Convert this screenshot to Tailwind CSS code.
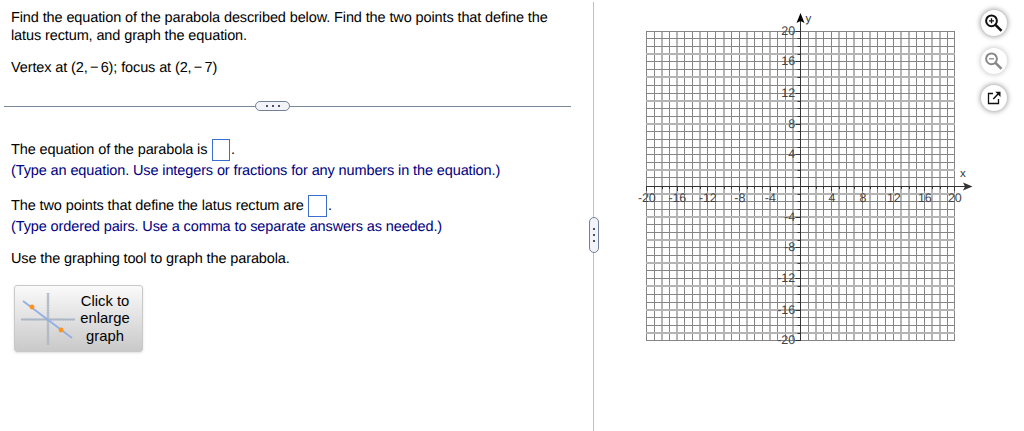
<!DOCTYPE html>
<html lang="en">
<head>
    <meta charset="UTF-8">
    <meta name="viewport" content="width=device-width, initial-scale=1.0">
    <title>Parabola Exercise</title>
    <script src="https://cdn.jsdelivr.net/npm/@tailwindcss/browser@4"></script>
</head>
<body class="bg-white text-black font-['Liberation_Sans',sans-serif] text-[14.5px] tracking-[-0.115px] leading-[18px] [text-rendering:geometricPrecision] h-[431px] flex overflow-hidden">

    <!-- Question -->
    <main class="w-[593px] shrink-0 pl-[11px] pt-[9px] whitespace-nowrap">
        <p>Find the equation of the parabola described below. Find the two points that define the<br>latus rectum, and graph the equation.</p>
        <p class="mt-[14px]">Vertex at (2,<span class="[word-spacing:-1.6px]"> − </span>6); focus at (2,<span class="[word-spacing:-1.6px]"> − </span>7)</p>

        <div class="flex items-center -ml-[7px] mt-[23px] w-[567px] h-3">
            <div class="h-px w-[251px] bg-[#7b889e]"></div>
            <div class="w-[35px] h-[10px] rounded-full border border-[#718096] bg-[#f3f4f9] flex items-center justify-center gap-[4px]">
                <i class="size-[2px] bg-[#4b5363]"></i><i class="size-[2px] bg-[#4b5363]"></i><i class="size-[2px] bg-[#4b5363]"></i>
            </div>
            <div class="h-px flex-1 bg-[#7b889e]"></div>
        </div>

        <div class="flex items-center mt-[26px] h-[23px]">
            <span class="w-[196px]">The equation of the parabola is</span>
            <span class="ml-[5px] w-[18px] h-[22px] border border-[#3c6ecb]"></span>
            <span class="ml-[1px]">.</span>
        </div>
        <p class="mt-px text-[#000080]">(Type an equation. Use integers or fractions for any numbers in the equation.)</p>

        <div class="flex items-center mt-[14px] h-[23px]">
            <span class="w-[292px]">The two points that define the latus rectum are</span>
            <span class="ml-[5px] w-[19px] h-[22px] border border-[#3c6ecb]"></span>
            <span class="ml-[1px]">.</span>
        </div>
        <p class="mt-px text-[#000080]">(Type ordered pairs. Use a comma to separate answers as needed.)</p>
        <p class="mt-[14px]">Use the graphing tool to graph the parabola.</p>

        <button class="ml-[3px] mt-[17px] w-[129px] h-[67px] flex items-center rounded-[3px] border border-[#c9c9c9] bg-linear-to-b from-[#fafafa] to-[#c9c9c9] shadow-sm">
            <svg class="ml-[6px] shrink-0" width="54" height="54" viewBox="0 0 54 54" fill="none">
                <path d="M0 27.5H54M27 1V53" stroke="#a5b2c0" stroke-width="1.5"/>
                <path d="M1 27.5H54M27 1V53" stroke="#b3bdc9" stroke-width="3" stroke-dasharray="1 1.4"/>
                <path d="M2 9L51 46" stroke="#91afe5" stroke-width="1.7"/>
                <circle cx="11" cy="15" r="2.4" fill="#fb931e"/>
                <circle cx="40" cy="38" r="2.4" fill="#fb931e"/>
            </svg>
            <span class="ml-[4px] mt-px w-[52px] text-center text-[14.8px] tracking-normal leading-[17.5px]">Click to<br>enlarge<br>graph</span>
        </button>
    </main>

    <!-- Divider with drag handle -->
    <div class="w-px shrink-0 mt-[2px] bg-[#c0c0cc] relative">
        <div class="absolute -left-[4px] top-[215px] w-[10px] h-[36px] rounded-full border border-[#718096] bg-[#f3f4f9] flex flex-col items-center justify-center gap-[4px]">
            <i class="size-[2px] bg-[#4b5363]"></i><i class="size-[2px] bg-[#4b5363]"></i><i class="size-[2px] bg-[#4b5363]"></i>
        </div>
    </div>

    <!-- Graph -->
    <svg class="shrink-0 ml-[36px]" width="350" height="431" viewBox="630 0 350 431">
        <g id="grid"></g>
        <g id="axes" stroke="#333">
            <path d="M646 186.5H966M800.5 20V341"/>
        </g>
        <path d="M800.5 13L804.5 23L800.5 21L796.5 23Z" fill="#000"/>
        <path d="M972.5 186.5L963 190.5L965 186.5L963 182.5Z" fill="#333"/>
        <g id="labels" fill="#444" font-size="12.5"></g>
        <text x="805.5" y="22" font-size="11.5" fill="#333">y</text>
        <text x="960" y="177" font-size="11.5" fill="#333">x</text>
    </svg>

    <!-- Graph tools -->
    <div class="flex flex-col gap-[11.5px] pt-[10px] pl-[1px]">
        <div class="size-[26px] rounded-full bg-white shadow-[0_0_5px_1px_rgba(0,0,0,0.36)] flex items-center justify-center">
            <svg width="18" height="18" viewBox="0 0 18 18" fill="none" stroke="#111"><circle cx="6.5" cy="6.8" r="5.4" stroke-width="2"/><path d="M10.5 10.8L16.5 16.8" stroke-width="2.6"/><path d="M4 6.8H9M6.5 4.3V9.3" stroke-width="1.3"/></svg>
        </div>
        <div class="size-[26px] rounded-full bg-white shadow-[0_0_5px_1px_rgba(0,0,0,0.2)] flex items-center justify-center">
            <svg width="18" height="18" viewBox="0 0 18 18" fill="none" stroke="#888"><circle cx="6.5" cy="6.8" r="5.4" stroke-width="2"/><path d="M10.5 10.8L16.5 16.8" stroke-width="2.6"/><path d="M4 6.8H9" stroke-width="1.3"/></svg>
        </div>
        <div class="size-[26px] rounded-full bg-white shadow-[0_0_5px_1px_rgba(0,0,0,0.36)] flex items-center justify-center">
            <svg width="14" height="14" viewBox="0 0 14 14" fill="none" stroke="#111"><path d="M6 2.5H1.5V12.5H11.5V8" stroke-width="1.3"/><path d="M6.3 8L11 3" stroke-width="1.5"/><path d="M8.3 0.8H13.5V6Z" fill="#111" stroke="none"/></svg>
        </div>
    </div>

    <script>
        const ns = 'http://www.w3.org/2000/svg';
        const grid = document.getElementById('grid');
        const axes = document.getElementById('axes');
        const labels = document.getElementById('labels');

        // Line centres; whole numbers straddle two pixels and are drawn wider and lighter
        const xs = [646.5, 654.5, 662, 669.5, 677, 684.5, 692.5, 700, 707.5, 715.5, 724, 731.5, 739.5, 747, 754.5, 762.5, 770, 777.5, 785.5, 793, 800.5,
            808.5, 816, 823.5, 831.5, 839, 846.5, 854, 862.5, 870, 877.5, 885.5, 893.5, 901, 909, 916.5, 924.5, 932, 940, 947.5, 954.5];
        const ys = [31.5, 38.5, 46.5, 54, 61.5, 69.5, 77, 85.5, 93.5, 101, 108.5, 116.5, 124, 131.5, 139.5, 147.5, 154.5, 162.5, 170, 177.5, 186.5,
            194, 201.5, 209.5, 217, 224.5, 232.5, 240, 247.5, 255.5, 263, 270.5, 278.5, 286, 294.5, 302.5, 310, 317.5, 325.5, 333, 340.5];

        function line(parent, d, center) {
            const p = document.createElementNS(ns, 'path');
            p.setAttribute('d', d);
            if (parent === grid) {
                const wide = Number.isInteger(center);
                p.setAttribute('stroke', wide ? '#b4b4b4' : '#858585');
                p.setAttribute('stroke-width', wide ? 2 : 1);
            }
            parent.appendChild(p);
        }

        function label(x, y, text, anchor) {
            const t = document.createElementNS(ns, 'text');
            t.setAttribute('x', x);
            t.setAttribute('y', y);
            t.setAttribute('text-anchor', anchor);
            t.textContent = text;
            labels.appendChild(t);
        }

        xs.forEach(x => line(grid, `M${x} 31V341`, x));
        ys.forEach(y => line(grid, `M646 ${y}H955`, y));

        for (let i = 0; i <= 40; i++) {
            const major = i % 4 === 0;
            line(axes, `M${Math.floor(xs[i]) + 0.5} 186V${major ? 191 : 189}`);
            line(axes, `M${major ? 795.5 : 797.5} ${Math.floor(ys[i]) + 0.5}H800`);
            if (major && i !== 20) {
                label(xs[i] + 0.3, 202, i - 20, 'middle');
                label(795, ys[i] + 3.7, 20 - i, 'end');
            }
        }
    </script>

</body>
</html>
